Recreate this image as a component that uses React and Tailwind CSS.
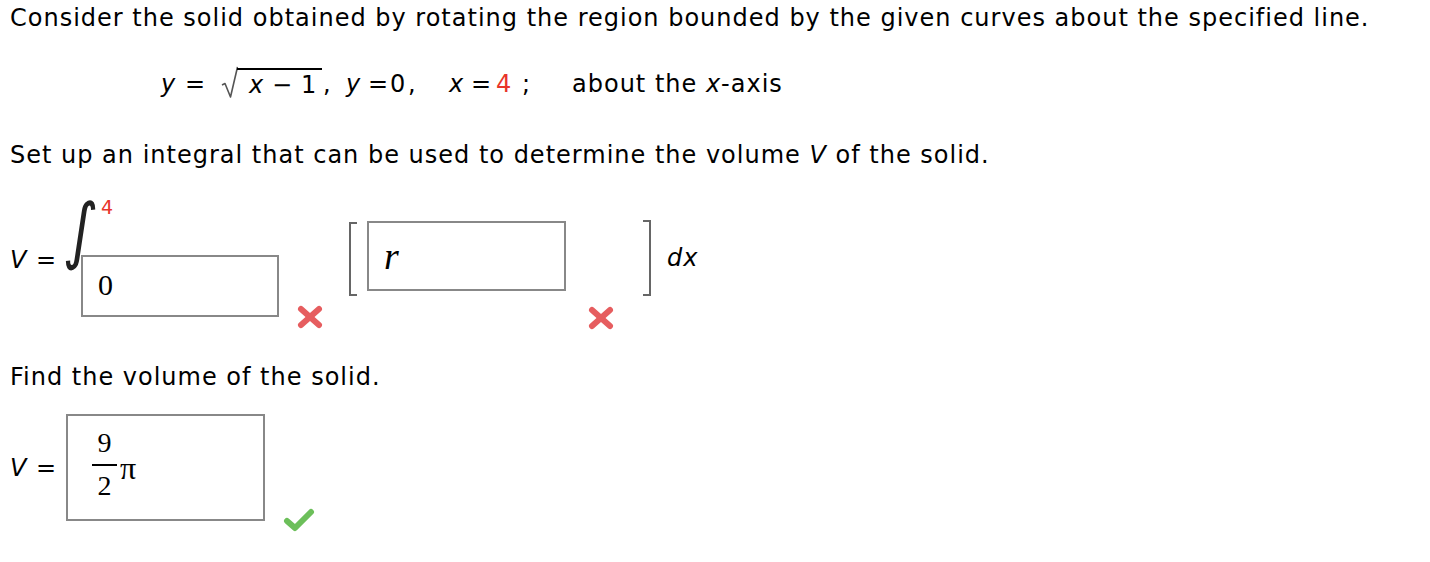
import React from "react";

function XMark() {
  return (
    <svg width="28" height="26" viewBox="0 0 28 26">
      <g stroke="#e65d5f" strokeWidth="6" strokeLinecap="round">
        <line x1="5" y1="5" x2="23" y2="21" />
        <line x1="23" y1="5" x2="5" y2="21" />
      </g>
    </svg>
  );
}

function Check() {
  return (
    <svg width="32" height="26" viewBox="0 0 32 26">
      <path d="M4 15 L12 22 L28 6" fill="none" stroke="#6cbf5a" strokeWidth="6" strokeLinecap="round" strokeLinejoin="round" />
    </svg>
  );
}

function Radical() {
  return (
    <svg width="17" height="32" viewBox="0 0 17 32" className="block">
      <path d="M1 19 L4 17.5 L9.5 31 L16.5 1" fill="none" stroke="#555" strokeWidth="1.6" strokeLinejoin="round" />
    </svg>
  );
}

const sans = { fontFamily: '"DejaVu Sans", Verdana, sans-serif' };
const serif = { fontFamily: '"Liberation Serif", "Times New Roman", serif' };

export default function App() {
  return (
    <div className="bg-white w-[1430px] h-[562px] text-black text-[24px] leading-[28px] tracking-[1px] relative" style={sans}>
      <div className="pl-[10px] pt-[4px]">Consider the solid obtained by rotating the region bounded by the given curves about the specified line.</div>

      <div className="flex items-end pl-[161px] mt-[34px] h-[32px] tracking-normal">
        <span className="italic w-[22px] shrink-0">y</span>
        <span className="w-[38px] pl-[2px] shrink-0">=</span>
        <span className="flex items-end shrink-0">
          <span className="w-[16px] overflow-visible"><Radical /></span>
          <span className="flex border-t-2 border-black w-[85px] pl-[12px] leading-[26px] mt-[2px] self-start h-[30px] items-end">
            <span className="italic w-[23px]">x</span>
            <span className="w-[29px]">−</span>
            <span>1</span>
          </span>
        </span>
        <span className="w-[24px] pl-[1px] shrink-0">,</span>
        <span className="italic w-[22px] shrink-0">y</span>
        <span className="w-[21px] shrink-0">=</span>
        <span className="w-[19px] pl-[1px] shrink-0">0</span>
        <span className="w-[41px] shrink-0">,</span>
        <span className="italic w-[22px] shrink-0">x</span>
        <span className="w-[25px] shrink-0">=</span>
        <span className="w-[26px] text-[#e8342a] shrink-0">4</span>
        <span className="w-[50px] shrink-0">;</span>
        <span className="tracking-[1px] shrink-0">about the <span className="italic">x</span>-axis</span>
      </div>

      <div className="pl-[10px] mt-[43px]">Set up an integral that can be used to determine the volume <span className="italic">V</span> of the solid.</div>

      <div className="flex pl-[10px] mt-[31px] h-[150px]">
        <div className="pt-[46px] w-[55px]"><span className="italic">V</span> =</div>
        <div className="relative w-[230px]">
          <span className="absolute left-[1px] top-[-10px] text-[58px] leading-[80px] text-[#222] origin-center scale-y-[1.25] -skew-x-[8deg]" style={sans}>∫</span>
          <span className="absolute left-[36px] top-[-7px] text-[#e8342a] text-[19px]">4</span>
          <div className="absolute left-[16px] top-[55px] w-[198px] h-[62px] border-2 border-[#888] flex items-center pl-[15px] pb-[3px] text-[30px]" style={serif}>0</div>
          <div className="absolute left-[231px] top-[104px]"><XMark /></div>
        </div>
        <div className="ml-[54px] mt-[22px] w-[8px] h-[74px] border-2 border-r-0 border-[#666]"></div>
        <div className="relative ml-[10px] w-[280px]">
          <div className="mt-[21px] w-[199px] h-[70px] border-2 border-[#888] flex items-center pl-[15px] italic text-[38px]" style={serif}>r</div>
          <div className="absolute left-[220px] top-[105px]"><XMark /></div>
        </div>
        <div className="-ml-[4px] mt-[20px] w-[8px] h-[76px] border-2 border-l-0 border-[#666]"></div>
        <div className="ml-[16px] pt-[44px] italic">dx</div>
      </div>

      <div className="pl-[10px] mt-[13px]">Find the volume of the solid.</div>

      <div className="flex pl-[10px] mt-[23px]">
        <div className="pt-[40px] w-[56px]"><span className="italic">V</span> =</div>
        <div className="w-[199px] h-[107px] border-2 border-[#888] flex items-center pl-[24px] tracking-normal" style={serif}>
          <div className="flex flex-col items-center text-[28px] leading-[22px] mb-[6px]">
            <span>9</span>
            <span className="w-[25px] border-t-2 border-black mt-[10px] mb-[9px]"></span>
            <span>2</span>
          </div>
          <span className="text-[32px] ml-[3px] leading-[30px] mt-[1px]">π</span>
        </div>
        <div className="ml-[18px] mt-[92px]"><Check /></div>
      </div>
    </div>
  );
}
